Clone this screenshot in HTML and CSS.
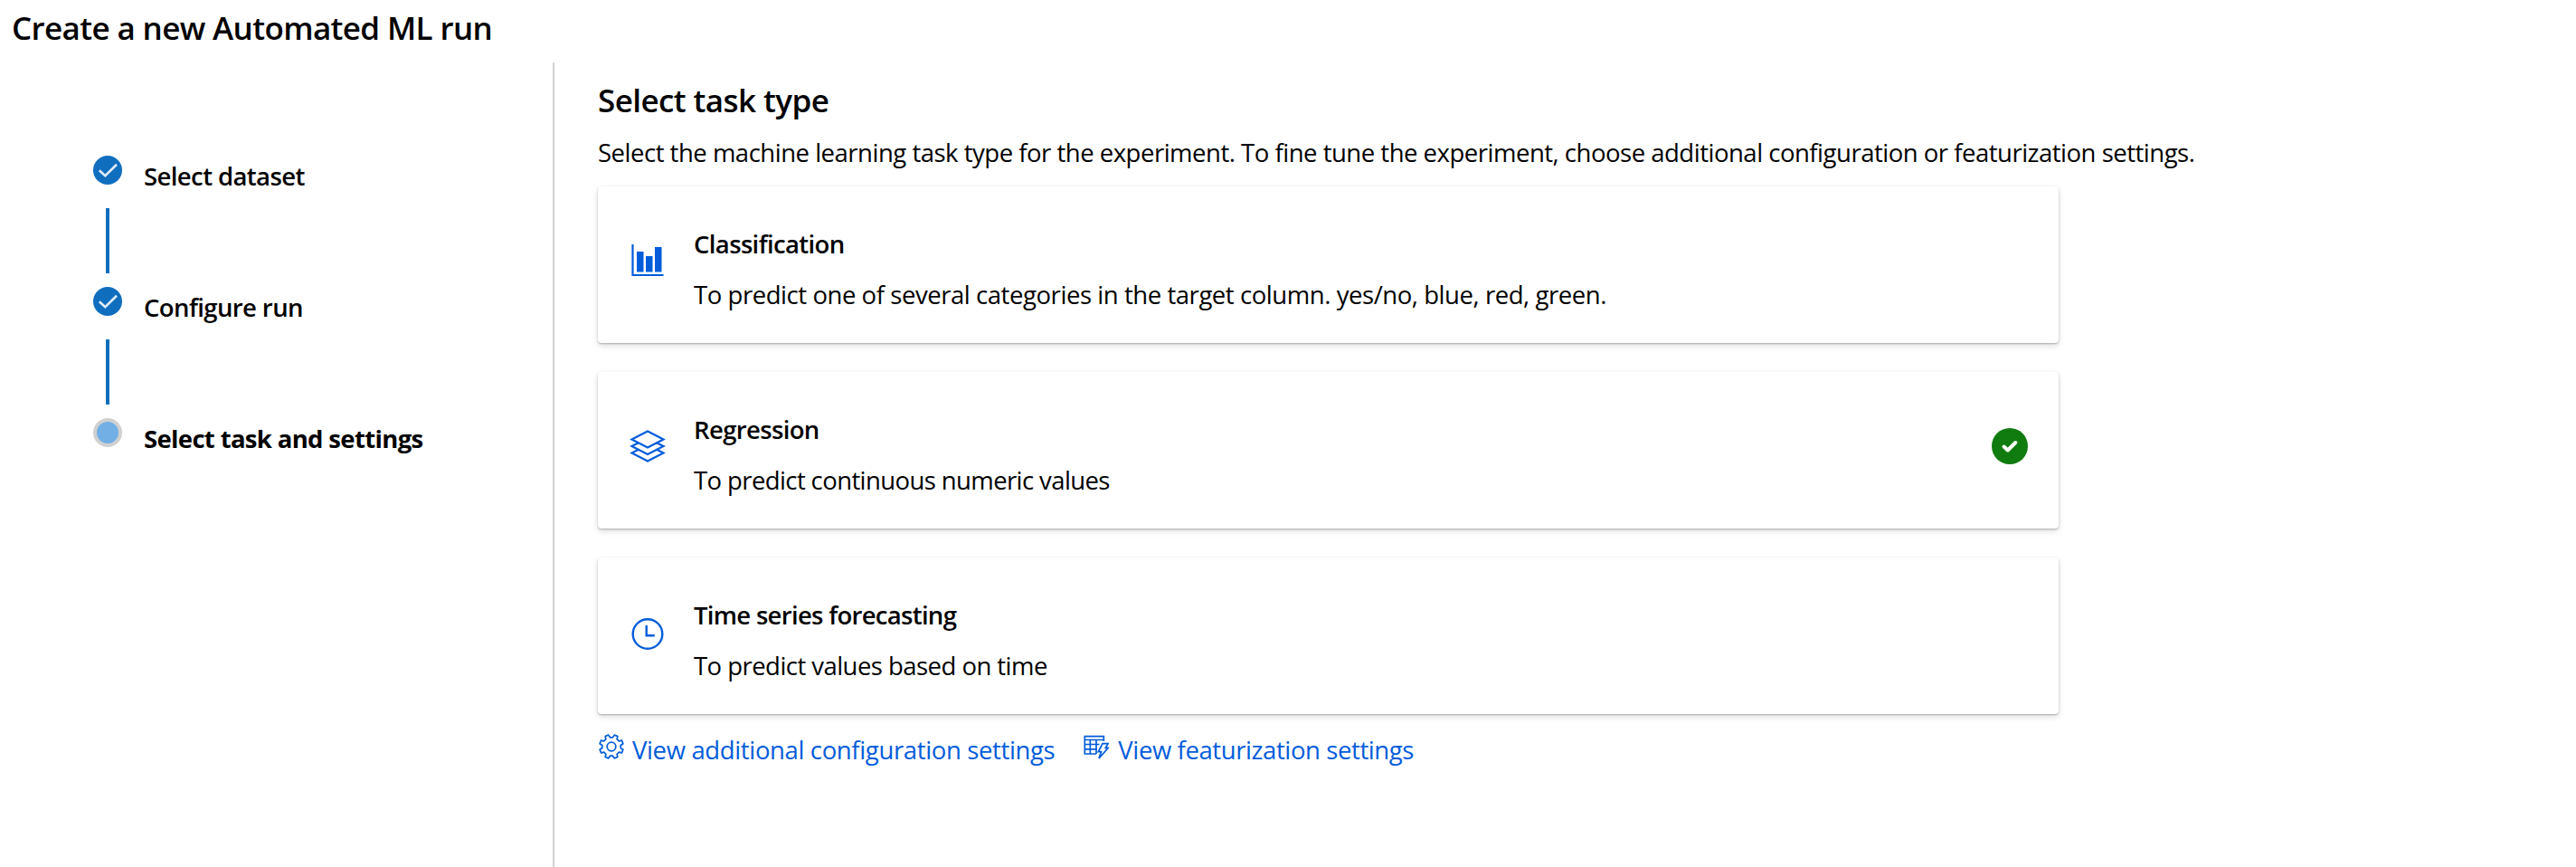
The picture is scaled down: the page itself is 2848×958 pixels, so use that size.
FILE: index.html
```html
<!DOCTYPE html>
<html lang="en">
<head>
<meta charset="utf-8">
<title>Create a new Automated ML run</title>
<link rel="stylesheet" href="styles.css">
</head>
<body>
<header class="page-header"><h1 class="page-title">Create a new Automated ML run</h1></header>
<div class="layout">
  <nav class="wizard">
    <ol class="steps">
      <li class="step">
        <svg class="marker" viewBox="0 0 32 32"><circle cx="16" cy="16" r="16" fill="#106ebe"/><path d="M6.800 16.200 13.300 22.200 26 9.800" fill="none" stroke="#deecf9" stroke-width="2.600"/></svg>
        <span class="step-label">Select dataset</span>
      </li>
      <li class="connector"></li>
      <li class="step">
        <svg class="marker" viewBox="0 0 32 32"><circle cx="16" cy="16" r="16" fill="#106ebe"/><path d="M6.800 16.200 13.300 22.200 26 9.800" fill="none" stroke="#deecf9" stroke-width="2.600"/></svg>
        <span class="step-label">Configure run</span>
      </li>
      <li class="connector"></li>
      <li class="step">
        <svg class="marker" viewBox="0 0 32 32"><circle cx="16" cy="16" r="14" fill="#71afe5" stroke="#d0d0d0" stroke-width="4"/></svg>
        <span class="step-label current">Select task and settings</span>
      </li>
    </ol>
  </nav>
  <main class="content">
    <h2 class="section-title">Select task type</h2>
    <p class="section-text">Select the machine learning task type for the experiment. To fine tune the experiment, choose additional configuration or featurization settings.</p>
    <div class="cards">
      <section class="card classification">
        <svg class="card-icon" viewBox="0 0 40 40"><path d="M3.500 2v34h34" fill="none" stroke="#015cda" stroke-width="2.200"/><path d="M8 10h7.500v22.500H8zM18 15h7.500v17.500H18zM28 5h7.500v27.500H28z" fill="#015cda"/></svg>
        <div class="card-body"><h3 class="card-title">Classification</h3><p class="card-text">To predict one of several categories in the target column. yes/no, blue, red, green.</p></div>
      </section>
      <section class="card regression">
        <svg class="card-icon" viewBox="0 0 40 40"><g fill="none" stroke="#015cda" stroke-width="2.200"><path d="M20 3.500 37.500 12.500 20 21.500 2.500 12.500z"/><path d="M10 16.200 2.500 20 20 29 37.500 20 30 16.200"/><path d="M10 23.700 2.500 27.500 20 36.500 37.500 27.500 30 23.700"/></g></svg>
        <div class="card-body"><h3 class="card-title">Regression</h3><p class="card-text">To predict continuous numeric values</p></div>
        <svg class="selected" viewBox="0 0 40 40"><circle cx="20" cy="20" r="20" fill="#107c10"/><path d="M13.500 20.500 17.800 24.500 26.300 16" fill="none" stroke="#fff" stroke-width="4" stroke-linecap="round" stroke-linejoin="round"/></svg>
      </section>
      <section class="card forecasting">
        <svg class="card-icon" viewBox="0 0 40 40"><circle cx="20" cy="22.500" r="16.300" fill="none" stroke="#015cda" stroke-width="2.400"/><path d="M18.700 13v11.200h9" fill="none" stroke="#015cda" stroke-width="2.400"/></svg>
        <div class="card-body"><h3 class="card-title">Time series forecasting</h3><p class="card-text">To predict values based on time</p></div>
      </section>
    </div>
    <div class="links">
      <a class="link"><svg class="link-icon" viewBox="-14 -14 28 28"><g fill="none" stroke="#015cda" stroke-width="1.700" stroke-linejoin="round"><path d="M10.200 1.500 12.900 3.300 11.500 6.800 8.300 6.100 6.100 8.300 6.800 11.500 3.300 12.900 1.500 10.200H-1.500L-3.300 12.900-6.800 11.500-6.100 8.300-8.300 6.100-11.500 6.800-12.900 3.300-10.200 1.500V-1.500L-12.900-3.300-11.500-6.800-8.300-6.100-6.100-8.300-6.800-11.500-3.300-12.900-1.500-10.200H1.500L3.300-12.900 6.800-11.500 6.100-8.300 8.300-6.100 11.500-6.800 12.900-3.300 10.200-1.500z"/><circle r="4.800"/></g></svg>View additional configuration settings</a>
      <a class="link"><svg class="link-icon" viewBox="0 0 28 28"><g fill="none" stroke="#015cda" stroke-width="1.700"><path d="M22.300 8V2.700H1.300V22H14M1.300 6.500H22.300M1.300 11.500H17.500M1.300 16.800H15M7.300 6.500V22M14 6.500V22M21 10.700H27L24.300 15.300H27.200L17 27 19.500 19.600H16.300z"/></g></svg>View featurization settings</a>
    </div>
  </main>
</div>
</body>
</html>
```
FILE: styles.css
```css
* { box-sizing: border-box; }
body { margin: 0; background: #fff; color: #000; font-family: "Open Sans", "Noto Sans", sans-serif; font-size: 27.5px; line-height: 40px; }
h1, h2, h3, p, ol { margin: 0; padding: 0; font-weight: 400; }

/* Page heading */
.page-header { height: 69px; padding: 7px 13px; }
.page-title, .section-title { font-size: 35px; line-height: 48px; font-weight: 600; white-space: nowrap; }
.page-title { letter-spacing: -0.63px; }
.section-title { letter-spacing: -0.58px; }

.layout { display: flex; height: 889px; }

/* Wizard steps */
.wizard { flex: none; width: 613px; padding: 103px 0 0 103px; border-right: 2px solid #d3d3d3; }
.steps { list-style: none; }
.step { display: flex; height: 58px; gap: 24px; }
.marker { width: 32px; height: 32px; flex: none; }
.step-label { padding-top: 3px; font-weight: 600; letter-spacing: -0.6px; white-space: nowrap; }
.current { font-weight: 700; letter-spacing: -0.66px; }
.connector { width: 4px; height: 72px; margin: 0 0 15px 14px; background: #106ebe; }

/* Task selection */
.content { padding: 18px 0 0 48px; }
.section-text { margin: 14px 0 17px; letter-spacing: -0.49px; white-space: nowrap; }
.cards { display: flex; flex-direction: column; gap: 32px; width: 1615px; }
.card { display: flex; height: 173px; padding: 44px 34px 0 35px; border-radius: 4px; box-shadow: 0 3px 7px rgba(0,0,0,.13), 0 1px 2px rgba(0,0,0,.26); }
.card-icon { width: 40px; height: 40px; margin: 18px 32px 0 0; flex: none; }
.card-body { flex: 1; margin-left: -1px; white-space: nowrap; }
.card-title { font-size: 27.5px; font-weight: 600; letter-spacing: -0.64px; }
.card-text { margin-top: 16px; letter-spacing: -0.44px; }
.regression .card-text { letter-spacing: -0.6px; }
.forecasting .card-title { letter-spacing: -0.7px; }
.forecasting .card-text { letter-spacing: -0.54px; }
.selected { width: 40px; height: 40px; margin-top: 18px; }

/* Settings links */
.links { display: flex; gap: 32px; margin-top: 20px; padding-left: 1px; color: #015cda; letter-spacing: -0.36px; }
.link { display: flex; gap: 9px; white-space: nowrap; }
.link + .link { gap: 10px; letter-spacing: -0.4px; }
.link-icon { width: 28px; height: 28px; margin-top: 2px; }
```
